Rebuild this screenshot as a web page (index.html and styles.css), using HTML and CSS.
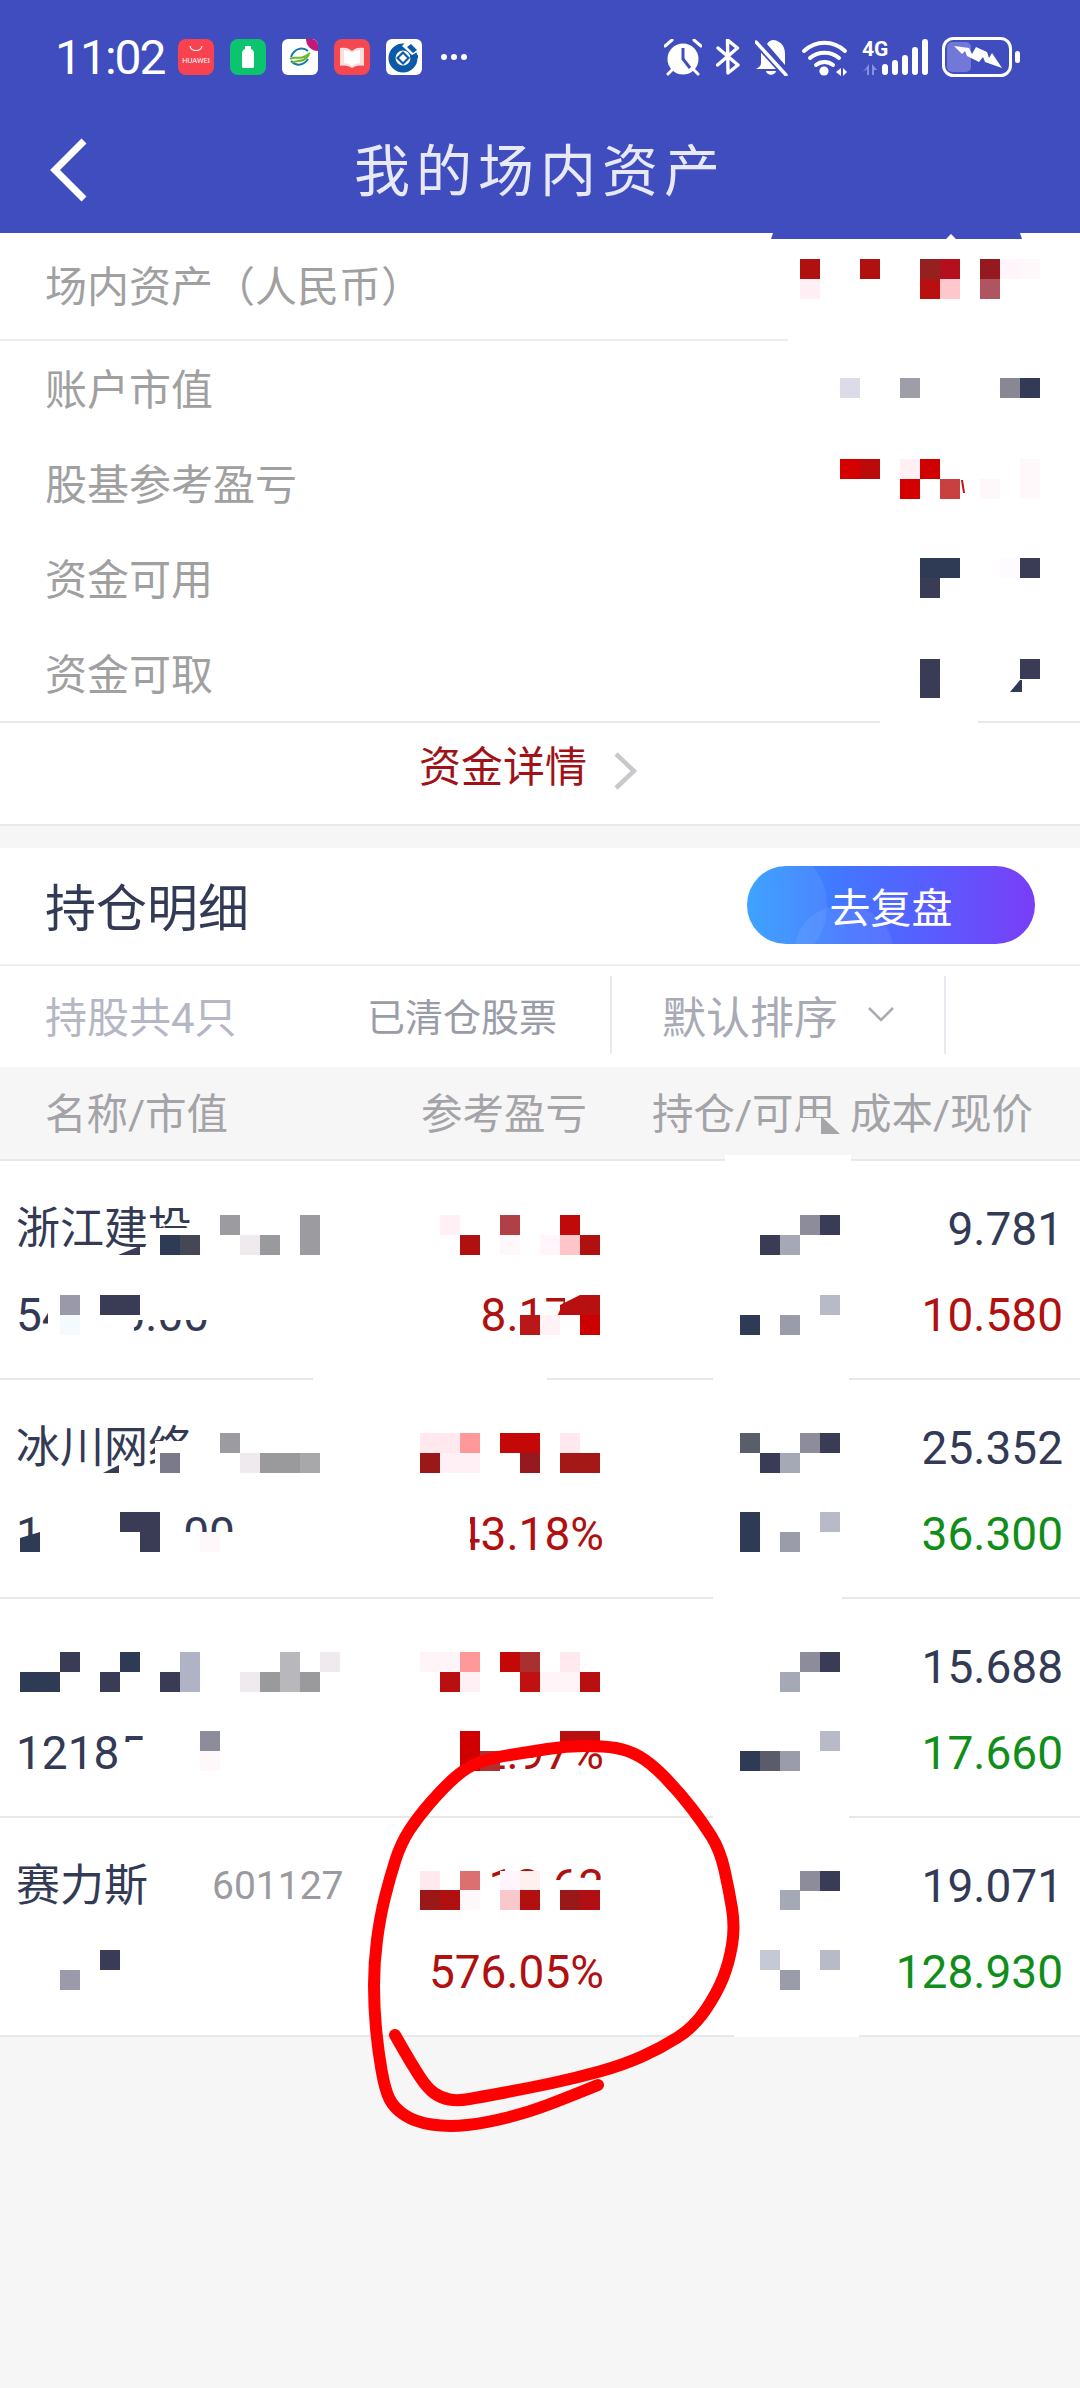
FILE: index.html
```html
<!DOCTYPE html>
<html lang="zh-CN">

<head>
    <meta charset="UTF-8">
    <meta name="viewport" content="width=device-width, initial-scale=1.0">
    <title>我的场内资产</title>
    <link rel="stylesheet" href="styles.css">
</head>

<body>
    <header class="top">
        <div class="status">
            <div class="status-left">
                <span class="time">11:02</span>
                <svg class="app" viewBox="0 0 36 36">
                    <rect width="36" height="36" rx="8" fill="#f8424f" />
                    <path d="M12 7c1 6 11 6 12 0" fill="none" stroke="#fff" stroke-width="1.2" />
                    <text x="18" y="24" class="app-label">HUAWEI</text>
                </svg>
                <svg class="app" viewBox="0 0 36 36">
                    <rect width="36" height="36" rx="8" fill="#0cc46e" />
                    <path d="M15 7h6v3c2 1 3 2 3 4v13c0 2-1 2-2 2h-8c-1 0-2 0-2-2V14c0-2 1-3 3-4z" fill="#fff" />
                </svg>
                <svg class="app" viewBox="0 0 36 36">
                    <rect width="36" height="36" rx="6" fill="#fff" />
                    <path d="M24 0h6a6 6 0 0 1 6 6v6a12 12 0 0 1-12-12z" fill="#c2187a" />
                    <path d="M9 18c3-8 11-11 17-6M9 22c6 6 13 4 17-2" fill="none" stroke="#1878a8" stroke-width="2" />
                    <path d="M8 20c6-4 9 3 20-6M10 24c6-4 10 1 17-8" fill="none" stroke="#6ab82e" stroke-width="2" />
                </svg>
                <svg class="app" viewBox="0 0 36 36">
                    <rect width="36" height="36" rx="8" fill="#f5474f" />
                    <path d="M6 9c5-1 9 0 12 3 3-3 7-4 12-3v18c-5-1-9 0-12 2-3-2-7-3-12-2z" fill="#ffdcdc" />
                    <path d="M10 11c3 0 6 1 8 3 2-2 5-3 8-3v13c-3 0-6 1-8 3-2-2-5-3-8-3z" fill="#fff" />
                </svg>
                <svg class="app" viewBox="0 0 36 36">
                    <rect width="36" height="36" rx="6" fill="#fff" />
                    <circle cx="17" cy="19" r="11" fill="none" stroke="#0a5aa6" stroke-width="7" />
                    <path d="M21 2l12 10-7 4-10-9z" fill="#fff" />
                    <path d="M21 8l4-3 6 6-4 3z M32 19h-8v-3h8z" fill="#0a5aa6" />
                    <path d="M17 12l7 7-7 7-7-7z" fill="#0a5aa6" />
                    <path d="M17 15l4 4-4 4-4-4z" fill="#fff" />
                </svg>
                <span class="more"><i></i><i></i><i></i></span>
            </div>
            <div class="status-right">
                <svg class="sys-alarm" viewBox="665 38 38 37">
                    <circle cx="684" cy="58" r="15.5" fill="#fff" />
                    <path d="M684 47v11l7 9" fill="none" stroke="#404dbf" stroke-width="3" />
                    <path d="M666 45l7-6M702 45l-7-6M669 73l4-4M699 73l-4-4" stroke="#fff" stroke-width="3" stroke-linecap="round" />
                </svg>
                <svg class="sys-bt" viewBox="717 39 24 36">
                    <path d="M719 48l20 17-10 8-.5-33 10 8-20 17" fill="none" stroke="#fff" stroke-width="3.4" stroke-linejoin="round" stroke-linecap="round" />
                </svg>
                <svg class="sys-bell" viewBox="756 38 33 37">
                    <path d="M762 47v15c0 3-2 4-5 6h22zM768 43c3-5 8-5 12-2 4 2 6 7 6 12v11z" fill="#fff" />
                    <path d="M767 70h10c-1 5-9 5-10 0z" fill="#fff" />
                    <path d="M757 41l30 33" stroke="#404dbf" stroke-width="7" />
                    <path d="M757 41l30 33" stroke="#fff" stroke-width="3.4" stroke-linecap="round" />
                </svg>
                <svg class="sys-wifi" viewBox="802 38 47 37">
                    <path d="M805 50c12-11 29-11 41 0M811 57c8-7 21-7 29 0M817 64c5-4 12-4 17 0" fill="none" stroke="#fff" stroke-width="4" stroke-linecap="round" />
                    <circle cx="825" cy="70" r="4.6" fill="#fff" />
                    <path d="M842 67v8l-5-4zM844 67v8l4-4z" fill="#fff" />
                </svg>
                <svg class="sys-net" viewBox="863 38 67 38">
                    <text x="863" y="56" class="net-label">4G</text>
                    <path d="M870 64v11h-2v-6l-4 3zM873 64l5 6-3 0v5h-2z" fill="#8a90dc" />
                    <rect x="883" y="64" width="6" height="11" rx="3" fill="#fff" />
                    <rect x="893" y="60" width="6" height="15" rx="3" fill="#fff" />
                    <rect x="903" y="55" width="6" height="20" rx="3" fill="#fff" />
                    <rect x="913" y="47" width="6" height="28" rx="3" fill="#fff" />
                    <rect x="923" y="39" width="6" height="36" rx="3" fill="#fff" />
                </svg>
                <svg class="sys-battery" viewBox="943 37 79 40">
                    <rect x="948" y="42" width="24" height="30" rx="5" fill="#7278d8" />
                    <rect x="944.5" y="38.500" width="67" height="37" rx="10" fill="none" stroke="#fff" stroke-width="3" />
                    <rect x="1016" y="51" width="5" height="12" rx="2.500" fill="#fff" />
                    <path d="M955 46l15 2 3 6 4-7 11 5 2 6 3-5 10 15-17-6-2-5-4 5-12-6-2-5-3 3z" fill="#fff" />
                </svg>
            </div>
        </div>
        <nav class="bar">
            <svg class="back" viewBox="0 0 38 64">
                <path d="M34 3L5 32l29 29" fill="none" stroke="#fff" stroke-width="7" />
            </svg>
            <h1 class="title">我的场内资产</h1>
        </nav>
    </header>

    <main>
        <section class="summary">
            <div class="summary-head">场内资产（人民币）</div>
            <div class="summary-list">
                <div class="summary-row">账户市值</div>
                <div class="summary-row">股基参考盈亏</div>
                <div class="summary-row">资金可用</div>
                <div class="summary-row">资金可取</div>
            </div>
            <a class="funds-link">
                <span>资金详情</span>
                <svg class="funds-arrow" viewBox="0 0 24 38">
                    <path d="M3 2l18 17L3 36" fill="none" stroke="#c9c9cd" stroke-width="4.500" />
                </svg>
            </a>
        </section>

        <section class="holdings">
            <div class="holdings-head">
                <h2 class="holdings-title">持仓明细</h2>
                <button class="review">去复盘</button>
            </div>

            <div class="filters">
                <span class="stock-count">持股共4只</span>
                <span class="cleared">已清仓股票</span>
                <span class="sort">默认排序
                    <svg class="sort-arrow" viewBox="0 0 26 15">
                        <path d="M1 1l12 12L25 1" fill="none" stroke="#a8aab5" stroke-width="2.500" />
                    </svg>
                </span>
            </div>

            <div class="table-head">
                <span class="th-name">名称/市值</span>
                <span class="th-profit">参考盈亏</span>
                <span class="th-hold">持仓/可用</span>
                <span class="th-cost">成本/现价</span>
            </div>

            <div class="stock">
                <span class="name">浙江建投</span>
                <span class="num red"></span>
                <span class="num"></span>
                <span class="num">9.781</span>
                <span class="value">54100.00</span>
                <span class="num red">8.17%</span>
                <span class="num"></span>
                <span class="num red">10.580</span>
            </div>
            <div class="stock">
                <span class="name">冰川网络</span>
                <span class="num red"></span>
                <span class="num"></span>
                <span class="num">25.352</span>
                <span class="value">114100.00</span>
                <span class="num red">43.18%</span>
                <span class="num"></span>
                <span class="num green">36.300</span>
            </div>
            <div class="stock">
                <span class="name"></span>
                <span class="num red"></span>
                <span class="num"></span>
                <span class="num">15.688</span>
                <span class="value">121854.00</span>
                <span class="num red">2.97%</span>
                <span class="num"></span>
                <span class="num green">17.660</span>
            </div>
            <div class="stock">
                <span class="name">赛力斯<em class="code">601127</em></span>
                <span class="num red">12.63</span>
                <span class="num"></span>
                <span class="num">19.071</span>
                <span class="value"></span>
                <span class="num red">576.05%</span>
                <span class="num"></span>
                <span class="num green">128.930</span>
            </div>
        </section>
    </main>

    <!-- privacy mosaics and the hand drawn circle, painted over the screenshot -->
    <svg class="overlay" width="1080" height="2388" viewBox="0 0 1080 2388">
        <!-- masks -->
        <g fill="#fff">
            <rect x="788" y="335" width="292" height="10" />
            <rect x="880" y="717" width="98" height="10" />
            <rect x="313" y="1376" width="234" height="8" />
            <rect x="713" y="1376" width="136" height="8" />
            <rect x="713" y="1593" width="129" height="8" />
            <rect x="713" y="1813" width="136" height="8" />
            <rect x="734" y="2030" width="125" height="7" />
            <rect x="725" y="1155" width="126" height="7" />
            <!-- row 1 -->
            <rect x="148" y="1228" width="56" height="32" />
            <rect x="48" y="1290" width="86" height="50" />
            <rect x="134" y="1290" width="76" height="30" />
            <rect x="565" y="1290" width="42" height="48" />
            <!-- row 2 -->
            <rect x="155" y="1441" width="45" height="36" />
            <rect x="42" y="1505" width="78" height="50" />
            <rect x="120" y="1505" width="64" height="50" />
            <rect x="184" y="1532" width="60" height="24" />
            <rect x="440" y="1505" width="30" height="50" />
            <!-- row 3 -->
            <rect x="145" y="1725" width="115" height="50" />
            <rect x="118" y="1742" width="27" height="33" />
            <rect x="480" y="1725" width="85" height="27" />
            <rect x="480" y="1752" width="20" height="22" />
            <!-- row 4 -->
            <rect x="410" y="1880" width="196" height="32" />
        </g>
        <rect x="800" y="1118" width="40" height="22" fill="#f6f6f6" />
        <path d="M821 1116l19 18h-19z" fill="#a6a6aa" />
        <path d="M771 239l2-6h247l2 6h-66l-5-5-5 5z" fill="#404dbf" />

        <g class="cells">
            <!-- summary -->
            <rect x="800" y="259" fill="#b01010" />
            <rect x="860" y="259" fill="#b01010" />
            <rect x="920" y="259" fill="#952020" />
            <rect x="940" y="259" fill="#b30f1c" />
            <rect x="980" y="259" fill="#951a20" />
            <rect x="1000" y="259" fill="#fff5fa" />
            <rect x="1020" y="259" fill="#fff8fb" />
            <rect x="800" y="279" fill="#fff0f5" />
            <rect x="920" y="279" fill="#b81010" />
            <rect x="940" y="279" fill="#ffc8cc" />
            <rect x="980" y="279" fill="#b05560" />

            <rect x="840" y="378" fill="#dcdce8" />
            <rect x="900" y="378" fill="#9e9ea8" />
            <rect x="1000" y="378" fill="#888895" />
            <rect x="1020" y="378" fill="#333a55" />

            <rect x="840" y="459" fill="#d40000" />
            <rect x="860" y="459" fill="#bb0a0a" />
            <rect x="900" y="459" fill="#fff0f5" />
            <rect x="920" y="459" fill="#d00000" />
            <rect x="1020" y="459" fill="#fff8fb" />
            <rect x="900" y="479" fill="#d40000" />
            <rect x="940" y="479" fill="#c84040" />
            <rect x="980" y="479" fill="#fff8fb" />
            <rect x="1020" y="479" fill="#fff8fb" />

            <rect x="920" y="558" fill="#2f3a55" />
            <rect x="940" y="558" fill="#2f3a55" />
            <rect x="1000" y="558" fill="#fdfbfd" />
            <rect x="1020" y="558" fill="#3a3c55" />
            <rect x="920" y="578" fill="#3a3c55" />

            <rect x="920" y="659" fill="#3a3c55" />
            <rect x="920" y="678" fill="#3a3c55" />
            <rect x="1020" y="659" fill="#3a3c55" />

            <!-- row 1 -->
            <rect x="220" y="1215" fill="#9c9ca0" />
            <rect x="300" y="1215" fill="#9c9ca0" />
            <rect x="440" y="1215" fill="#fff0f5" />
            <rect x="500" y="1215" fill="#b04048" />
            <rect x="560" y="1215" fill="#c00a0a" />
            <rect x="800" y="1215" fill="#8c8c9a" />
            <rect x="820" y="1215" fill="#3a3c55" />
            <rect x="160" y="1235" fill="#2f3a55" />
            <rect x="180" y="1235" fill="#454755" />
            <rect x="240" y="1235" fill="#eeeaee" />
            <rect x="260" y="1235" fill="#9a9a9e" />
            <rect x="300" y="1235" fill="#9c9ca0" />
            <rect x="460" y="1235" fill="#b01010" />
            <rect x="500" y="1235" fill="#fef8fb" />
            <rect x="540" y="1235" fill="#fff5fa" />
            <rect x="560" y="1235" fill="#ffc5c8" />
            <rect x="580" y="1235" fill="#b01010" />
            <rect x="760" y="1235" fill="#3a3c55" />
            <rect x="780" y="1235" fill="#a5a8b5" />
            <rect x="60" y="1295" fill="#9999aa" />
            <rect x="100" y="1295" fill="#3a3c55" />
            <rect x="120" y="1295" fill="#3a3c55" />
            <rect x="580" y="1295" fill="#b81010" />
            <rect x="820" y="1295" fill="#b8bac8" />
            <rect x="60" y="1315" fill="#f5faff" />
            <rect x="520" y="1315" fill="#b81818" />
            <rect x="540" y="1315" fill="#fff3f5" />
            <rect x="560" y="1315" fill="#fff" />
            <rect x="580" y="1315" fill="#cc0000" />
            <rect x="740" y="1315" fill="#2f3a55" />
            <rect x="780" y="1315" fill="#9a9caa" />

            <!-- row 2 -->
            <rect x="220" y="1433" fill="#9c9ca0" />
            <rect x="420" y="1433" fill="#ffe8ee" />
            <rect x="440" y="1433" fill="#ffe8ee" />
            <rect x="460" y="1433" fill="#ff9898" />
            <rect x="500" y="1433" fill="#c40808" />
            <rect x="520" y="1433" fill="#c40808" />
            <rect x="560" y="1433" fill="#ffe8ee" />
            <rect x="740" y="1433" fill="#5a5e6a" />
            <rect x="800" y="1433" fill="#8c8c9a" />
            <rect x="820" y="1433" fill="#3a3c55" />
            <rect x="160" y="1453" fill="#7a7a8a" />
            <rect x="240" y="1453" fill="#eeeaee" />
            <rect x="260" y="1453" fill="#9a9a9c" />
            <rect x="280" y="1453" fill="#9a9a9c" />
            <rect x="300" y="1453" fill="#a8a8aa" />
            <rect x="420" y="1453" fill="#9a1818" />
            <rect x="440" y="1453" fill="#fff0f5" />
            <rect x="460" y="1453" fill="#fff0f5" />
            <rect x="520" y="1453" fill="#951a20" />
            <rect x="560" y="1453" fill="#a51818" />
            <rect x="580" y="1453" fill="#a51818" />
            <rect x="760" y="1453" fill="#3a3c55" />
            <rect x="780" y="1453" fill="#a5a8b5" />
            <rect x="120" y="1512" fill="#3a3c55" />
            <rect x="140" y="1512" fill="#3a3c55" />
            <rect x="740" y="1512" fill="#2f3a55" />
            <rect x="820" y="1512" fill="#b8bac8" />
            <rect x="140" y="1532" fill="#3a3c55" />
            <rect x="200" y="1532" fill="#fff8fb" />
            <rect x="740" y="1532" fill="#2f3a55" />
            <rect x="780" y="1532" fill="#9a9caa" />

            <!-- row 3 -->
            <rect x="60" y="1652" fill="#3a3c55" />
            <rect x="120" y="1652" fill="#2f3a55" />
            <rect x="180" y="1652" fill="#b0b2c5" />
            <rect x="280" y="1652" fill="#b8b8bc" />
            <rect x="320" y="1652" fill="#eeeaee" />
            <rect x="420" y="1652" fill="#fff5f8" />
            <rect x="440" y="1652" fill="#fff5f8" />
            <rect x="460" y="1652" fill="#ff9898" />
            <rect x="500" y="1652" fill="#c40808" />
            <rect x="520" y="1652" fill="#a83030" />
            <rect x="560" y="1652" fill="#ffe8ee" />
            <rect x="800" y="1652" fill="#8c8c9a" />
            <rect x="820" y="1652" fill="#3a3c55" />
            <rect x="20" y="1672" fill="#2f3a55" />
            <rect x="40" y="1672" fill="#2f3a55" />
            <rect x="100" y="1672" fill="#3a3c55" />
            <rect x="160" y="1672" fill="#3a3c55" />
            <rect x="180" y="1672" fill="#b0b2c5" />
            <rect x="240" y="1672" fill="#eeeaee" />
            <rect x="260" y="1672" fill="#9a9a9c" />
            <rect x="280" y="1672" fill="#b8b8bc" />
            <rect x="300" y="1672" fill="#9a9a9c" />
            <rect x="440" y="1672" fill="#b81010" />
            <rect x="460" y="1672" fill="#fff0f5" />
            <rect x="520" y="1672" fill="#c01010" />
            <rect x="540" y="1672" fill="#fff5f8" />
            <rect x="560" y="1672" fill="#fff5f8" />
            <rect x="580" y="1672" fill="#b81010" />
            <rect x="780" y="1672" fill="#a5a8b5" />
            <rect x="200" y="1731" fill="#8c8c9a" />
            <rect x="460" y="1731" fill="#d00000" />
            <rect x="560" y="1731" fill="#b81010" />
            <rect x="580" y="1731" fill="#b81010" />
            <rect x="820" y="1731" fill="#b8bac8" />
            <rect x="200" y="1751" fill="#fff8fb" />
            <rect x="460" y="1751" fill="#d00000" />
            <rect x="480" y="1751" fill="#b03030" />
            <rect x="740" y="1751" fill="#2f3a55" />
            <rect x="760" y="1751" fill="#5a5c6a" />
            <rect x="780" y="1751" fill="#9a9caa" />

            <!-- row 4 -->
            <rect x="420" y="1871" fill="#ffe8ee" />
            <rect x="460" y="1871" fill="#dc7070" />
            <rect x="500" y="1871" fill="#fff5fb" />
            <rect x="520" y="1871" fill="#fff0f0" />
            <rect x="800" y="1871" fill="#8c8c9a" />
            <rect x="820" y="1871" fill="#3a3c55" />
            <rect x="420" y="1890" fill="#9a1818" />
            <rect x="440" y="1890" fill="#b01010" />
            <rect x="460" y="1890" fill="#fff8fb" />
            <rect x="500" y="1890" fill="#f8c8cc" />
            <rect x="520" y="1890" fill="#b01010" />
            <rect x="560" y="1890" fill="#9a1818" />
            <rect x="580" y="1890" fill="#b00f14" />
            <rect x="780" y="1890" fill="#a5a8b5" />
            <rect x="100" y="1950" fill="#3a3c55" />
            <rect x="760" y="1950" fill="#c5c8d5" />
            <rect x="820" y="1950" fill="#b8bac8" />
            <rect x="60" y="1970" fill="#9a9aaa" />
            <rect x="780" y="1970" fill="#9a9caa" />
        </g>

        <!-- bits of digits and slopes left at the mosaic edges -->
        <path d="M1010 692l10-12h2v12z" fill="#2f3a55" />
        <path d="M961 480h2l2 13h-2z" fill="#c01010" />
        <path d="M118 1255l22-9v9z" fill="#3a3c55" />
        <path d="M560 1305l20-10v20h-20z" fill="#b81010" />
        <path d="M103 1473l16-8v8z" fill="#3a3c55" />
        <path d="M20 1552v-14l20-6v20z" fill="#2f3a55" />

        <path class="circle" d="M395 2035L403 2049Q411 2063 419 2075.5Q427 2088 434 2093Q441 2098 449.5 2099.5Q458 2101 469.5 2099Q481 2097 505 2092.5Q529 2088 552.5 2083Q576 2078 599.5 2071.5Q623 2065 642 2056.5Q661 2048 677.5 2037.5Q694 2027 705.5 2010Q717 1993 723 1978Q729 1963 732 1945Q735 1927 732 1908.5Q729 1890 724.5 1870Q720 1850 711.5 1836.5Q703 1823 691.5 1808Q680 1793 665.5 1778Q651 1763 639.5 1756.5Q628 1750 616 1748Q604 1746 585 1746Q566 1746 547.5 1749Q529 1752 510 1755Q491 1758 479 1762.5Q467 1767 455.5 1777Q444 1787 431 1802Q418 1817 409.5 1830Q401 1843 395.5 1860Q390 1877 385 1897Q380 1917 377 1940Q374 1963 374 1985Q374 2007 376 2028.5Q378 2050 381.5 2070Q385 2090 389.5 2099Q394 2108 404.5 2115Q415 2122 431.5 2124.5Q448 2127 467 2125Q486 2123 507.5 2117.5Q529 2112 547.5 2105Q566 2098 598 2085" />
    </svg>
</body>

</html>
```

FILE: styles.css
```css
* {
    margin: 0;
    padding: 0;
    box-sizing: border-box;
}

body {
    position: relative;
    width: 1080px;
    height: 2388px;
    overflow: hidden;
    background-color: #f6f6f6;
    font-family: Roboto, "Noto Sans CJK SC", sans-serif;
    font-size: 42px;
}

/* header */
.top {
    height: 233px;
    background-color: #404dbf;
}

.status {
    display: flex;
    justify-content: space-between;
    align-items: center;
    height: 114px;
    padding: 0 59px 0 55px;
}

.status-left,
.status-right {
    display: flex;
    align-items: center;
}

.time {
    width: 123px;
    color: white;
    font-size: 48px;
    letter-spacing: -2px;
}

.app {
    width: 36px;
    height: 36px;
    margin-right: 16px;
}

.app-label {
    fill: white;
    font-family: Roboto, sans-serif;
    font-size: 7.500px;
    text-anchor: middle;
}

.more {
    display: flex;
    gap: 4px;
    margin-left: 3px;
}

.more i {
    width: 6px;
    height: 6px;
    border-radius: 50%;
    background-color: white;
}

.sys-alarm {
    width: 38px;
    height: 37px;
    margin-right: 14px;
}

.sys-bt {
    width: 24px;
    height: 36px;
    margin-right: 15px;
}

.sys-bell {
    width: 33px;
    height: 37px;
    margin-right: 13px;
}

.sys-wifi {
    width: 47px;
    height: 37px;
    margin-right: 14px;
}

.sys-net {
    width: 67px;
    height: 38px;
    margin-right: 13px;
}

.sys-battery {
    width: 79px;
    height: 40px;
}

.net-label {
    fill: white;
    font-family: Roboto, sans-serif;
    font-size: 21px;
    font-weight: 700;
}

.bar {
    position: relative;
    height: 112px;
    text-align: center;
}

.back {
    position: absolute;
    left: 50px;
    top: 24px;
    width: 38px;
    height: 64px;
}

.title {
    color: #e8e9f6;
    font-size: 56px;
    font-weight: 400;
    line-height: 116px;
    letter-spacing: 6px;
}

/* summary */
.summary {
    background-color: white;
    border-bottom: 2px solid #e8e8e8;
    color: #a0a0a0;
}

.summary-head {
    height: 108px;
    padding-left: 45px;
    border-bottom: 2px solid #ececec;
    line-height: 110px;
}

.summary-list {
    border-bottom: 2px solid #e8e8e8;
}

.summary-row {
    height: 95px;
    padding-left: 45px;
    line-height: 100px;
}

.funds-link {
    display: flex;
    justify-content: center;
    align-items: center;
    gap: 26px;
    height: 101px;
    padding: 0 24px 20px 0;
    color: #a01218;
}

.funds-arrow {
    width: 24px;
    height: 38px;
    margin-top: 14px;
}

/* holdings */
.holdings {
    margin-top: 22px;
    background-color: white;
    color: #333a55;
}

.holdings-head {
    display: flex;
    justify-content: space-between;
    align-items: center;
    height: 118px;
    padding: 0 45px;
    border-bottom: 2px solid #eeeef5;
}

.holdings-title {
    font-size: 51px;
    font-weight: 400;
    margin-top: -2px;
}

.review {
    position: relative;
    overflow: hidden;
    width: 288px;
    height: 78px;
    border: none;
    border-radius: 39px;
    background: linear-gradient(90deg, #2f9dff 0%, #4474ff 35%, #5560ff 60%, #7a3df7 100%);
    color: white;
    font-family: inherit;
    font-size: 41px;
    margin-top: -2px;
}

.review::before,
.review::after {
    content: "";
    position: absolute;
    border-radius: 50%;
    background-color: rgba(255, 255, 255, 0.07);
}

.review::before {
    left: -30px;
    top: -20px;
    width: 110px;
    height: 120px;
}

.review::after {
    left: 48px;
    top: 39px;
    width: 98px;
    height: 90px;
}

.filters {
    display: flex;
    align-items: center;
    height: 101px;
    padding: 0 0 4px 45px;
}

.stock-count {
    width: 322px;
    color: #b5b7c5;
}

.cleared {
    width: 243px;
    color: #9a9ca8;
    font-size: 38px;
}

.sort {
    display: flex;
    align-items: center;
    width: 336px;
    height: 78px;
    padding-left: 50px;
    border-left: 2px solid #e8e8ee;
    border-right: 2px solid #e8e8ee;
    color: #a8aab5;
    font-size: 44px;
}

.sort-arrow {
    width: 26px;
    height: 15px;
    margin-left: 30px;
}

.table-head {
    display: flex;
    align-items: center;
    height: 94px;
    padding: 0 0 4px 45px;
    background-color: #f6f6f6;
    border-bottom: 2px solid #e8e8e8;
    color: #a3a3a8;
    font-size: 41.500px;
}

.th-name {
    width: 376px;
}

.th-profit {
    width: 231px;
}

.th-hold {
    width: 198px;
}

.stock {
    display: grid;
    grid-template-columns: 381px 207px 236px 223px;
    grid-auto-rows: 86px;
    height: 219px;
    padding: 25px 14px 0 16px;
    border-bottom: 2px solid #e8e8e8;
    font-size: 46px;
    line-height: 86px;
}

.name {
    display: flex;
    align-items: center;
    font-size: 44px;
}

.code {
    margin-left: 64px;
    color: #9a9aa0;
    font-size: 39px;
    font-style: normal;
}

.num {
    text-align: right;
}

.red {
    color: #b01010;
}

.green {
    color: #0f8f1a;
}

/* everything painted on top of the page */
.overlay {
    position: absolute;
    left: 0;
    top: 0;
    pointer-events: none;
}

.cells rect {
    width: 20px;
    height: 20px;
}

.circle {
    fill: none;
    stroke: #ff0000;
    stroke-width: 12;
    stroke-linecap: round;
    stroke-linejoin: round;
}
```
